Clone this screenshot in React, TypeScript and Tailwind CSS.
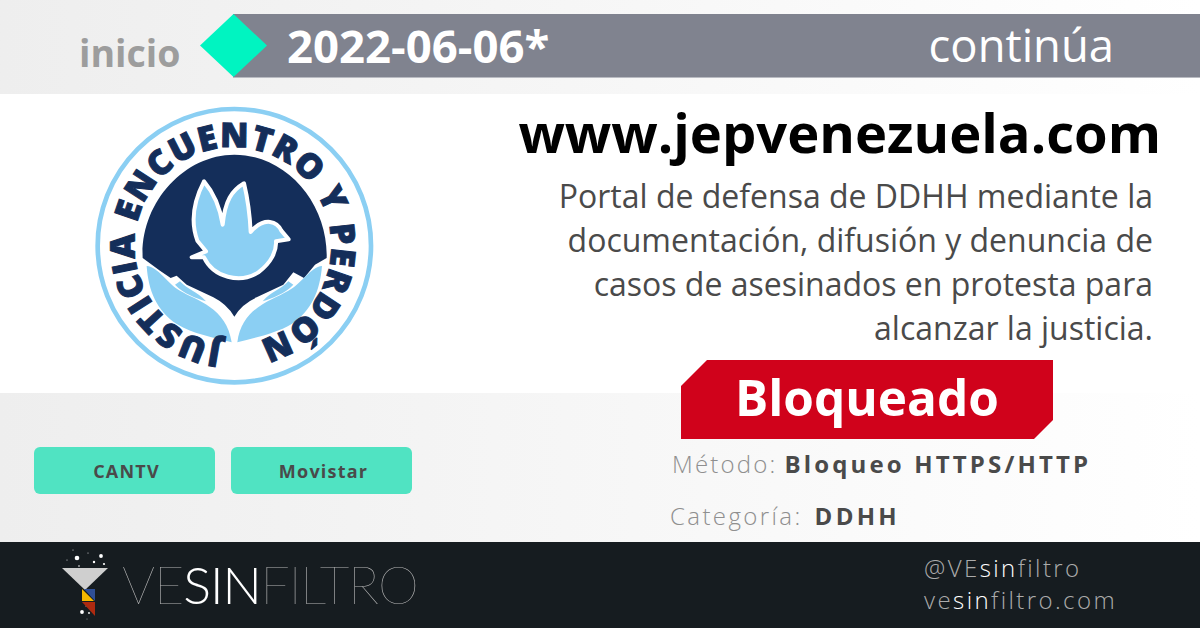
import React from "react";

const OS = "font-['Open_Sans',sans-serif]";

function Logo() {
  return (
    <svg viewBox="0 0 930 900" className="w-[310px] h-[300px]">
      <defs>
        <path id="ring" d="M426 748 A295 295 0 1 1 506 746" />
      </defs>
      <circle cx="463" cy="455" r="410" fill="#fff" stroke="#8bcff3" strokeWidth="14" />
      <path
        d="M188 492 C180 330 310 182 463 182 C620 182 745 330 740 492 L705 512 L672 552 L640 535 L610 572 L530 610 Q485 630 463 668 Q440 630 400 610 L320 572 L290 545 L272 552 L240 530 Z"
        fill="#142e5a"
      />
      <path
        d="M200 516 C235 518 262 570 300 590 C350 620 440 640 455 745 C400 730 340 720 290 690 C230 650 205 590 200 516 Z"
        fill="#8bcff3"
      />
      <path d="M285 572 L300 562 C325 590 350 590 378 622 C350 612 310 600 285 572 Z" fill="#8bcff3" />
      <path
        d="M726 516 C692 518 665 570 625 590 C575 620 485 640 472 745 C525 730 585 720 635 690 C695 650 720 590 726 516 Z"
        fill="#8bcff3"
      />
      <path d="M640 572 L625 562 C600 590 575 590 548 622 C575 612 615 600 640 572 Z" fill="#8bcff3" />
      <path
        d="M372 262 C342 320 330 380 352 440 L378 472 L335 490 L372 490 C400 550 480 570 535 535 C575 505 590 470 588 442 L626 436 L604 410 C590 380 555 372 520 405 L512 414 C510 370 502 310 492 268 C455 290 435 320 428 392 C420 340 400 295 372 262 Z"
        fill="#8bcff3"
        stroke="#fff"
        strokeWidth="12"
        strokeLinejoin="round"
      />
      <text
        fontFamily="'Open Sans',sans-serif"
        fontWeight="800"
        fontSize="102"
        fill="#142e5a"
        stroke="#142e5a"
        strokeWidth="3"
      >
        <textPath href="#ring" textLength="1740" lengthAdjust="spacing">
          JUSTICIA ENCUENTRO Y PERDÓN
        </textPath>
      </text>
    </svg>
  );
}

function Funnel() {
  return (
    <svg viewBox="0 0 50 72" className="w-[50px] h-[72px]">
      <g fill="#fff">
        <circle cx="17" cy="9" r="2.3" />
        <circle cx="41" cy="7" r="1.9" />
        <circle cx="34" cy="13" r="1.2" />
        <circle cx="44" cy="15" r="1.1" />
        <circle cx="19" cy="17" r="0.8" />
        <circle cx="13" cy="1" r="0.5" />
        <circle cx="28" cy="4" r="0.5" />
        <circle cx="7" cy="11" r="0.5" />
        <circle cx="22" cy="63" r="1.9" />
        <circle cx="29" cy="64" r="0.9" />
        <circle cx="26" cy="57" r="0.5" />
        <circle cx="27" cy="70" r="0.4" />
      </g>
      <polygon points="2,19 48,19 25,41" fill="#cfcfcf" />
      <polygon points="22,40 34,52 22,52" fill="#f5b800" />
      <polygon points="35,40 35,52 24,40" fill="#2f4f96" />
      <polygon points="22,53 35,53 35,67" fill="#ad2a10" />
    </svg>
  );
}

export default function App() {
  return (
    <div className={`w-[1200px] h-[628px] overflow-hidden flex flex-col ${OS}`}>
      <header className="h-[94px] pt-[14px] flex bg-gradient-to-r from-[#eeeeee] to-[#ffffff]">
        <div className="w-[200px] h-[63px] pl-[79px] flex items-end">
          <span className="text-[37.5px] leading-[50px] font-bold text-[#9d9d9d] relative top-[1px]">inicio</span>
        </div>
        <div className="w-[67px] h-[63px] bg-[#00f4c1] [clip-path:polygon(50%_0,100%_50%,50%_100%,0_50%)] relative z-10 shrink-0" />
        <div className="flex-1 h-[64px] -ml-[34px] bg-[#80838f] border-b border-b-[#b9bbc2] flex items-center justify-between pl-[54px] pr-[86px] text-white">
          <span className="text-[45.5px] leading-[64px] font-bold relative -top-[1px]">2022-06-06*</span>
          <span className="text-[45.4px] leading-[64px] relative -top-[2px]">continúa</span>
        </div>
      </header>

      <main className="h-[448px] flex bg-[linear-gradient(#ffffff_0,#ffffff_299px,transparent_299px),linear-gradient(90deg,#eeeeee,#ffffff)]">
        <div className="w-[470px] shrink-0 flex flex-col">
          <div className="h-[299px] pl-[80px] flex items-start">
            <Logo />
          </div>
          <div className="pl-[34px] pt-[54px] flex gap-[16px]">
            <div className="w-[181px] h-[47px] pl-[4px] pt-[1px] rounded-[6px] bg-[#50e3c2] flex items-center justify-center text-[18px] font-bold tracking-[1.2px] text-[#4a4a4a]">
              CANTV
            </div>
            <div className="w-[181px] h-[47px] pl-[4px] pt-[1px] rounded-[6px] bg-[#50e3c2] flex items-center justify-center text-[18px] font-bold tracking-[1.2px] text-[#4a4a4a]">
              Movistar
            </div>
          </div>
        </div>

        <div className="flex-1 flex flex-col">
          <h1 className="h-[80px] pr-[39px] text-right text-[54.3px] leading-[76px] font-bold text-black whitespace-nowrap">
            www.jepvenezuela.com
          </h1>
          <p className="pr-[47px] text-right text-[32px] leading-[44px] text-[#4a4a4a] whitespace-nowrap">
            Portal de defensa de DDHH mediante la
            <br />
            documentación, difusión y denuncia de
            <br />
            casos de asesinados en protesta para
            <br />
            alcanzar la justicia.
          </p>
          <div className="mt-[10px] ml-[211px] w-[372px] h-[79px] bg-[#d0021b] [clip-path:polygon(26px_0,100%_0,100%_60px,353px_100%,0_100%,0_26px)] flex items-center justify-center text-white text-[49.5px] font-bold">
            <span className="relative -top-[2px]">Bloqueado</span>
          </div>
          <div className="mt-[7px] ml-[202px] h-[36px] flex items-center gap-[7px] whitespace-nowrap">
            <span className="text-[24px] font-light tracking-[2.2px] text-[#8f8f8f]">Método:</span>
            <span className="text-[24px] font-bold tracking-[3.15px] text-[#4a4a4a]">Bloqueo HTTPS/HTTP</span>
          </div>
          <div className="mt-[16px] ml-[200px] h-[36px] flex items-center gap-[12px] whitespace-nowrap">
            <span className="text-[24px] font-light tracking-[2.4px] text-[#8f8f8f]">Categoría:</span>
            <span className="text-[24px] font-bold tracking-[3.3px] text-[#4a4a4a]">DDHH</span>
          </div>
        </div>
      </main>

      <footer className="h-[86px] bg-[#161c20] flex items-center justify-between pl-[60px] pr-[83px]">
        <div className="flex items-center gap-[12px]">
          <Funnel />
          <div className="font-['Lato',sans-serif] text-[52px] leading-[60px] text-[#b5b5b5] font-thin whitespace-nowrap relative -top-[1px] tracking-[-1.1px]">
            <span>VE</span>
            <span className="font-light text-white">SIN</span>
            <span>FILTRO</span>
          </div>
        </div>
        <div className="text-[24px] leading-[32px] tracking-[2.4px] text-[#ababab] font-light relative -top-[1px]">
          <div>
            @VE<span className="text-white">sin</span>filtro
          </div>
          <div>
            ve<span className="text-white">sin</span>filtro.com
          </div>
        </div>
      </footer>
    </div>
  );
}
